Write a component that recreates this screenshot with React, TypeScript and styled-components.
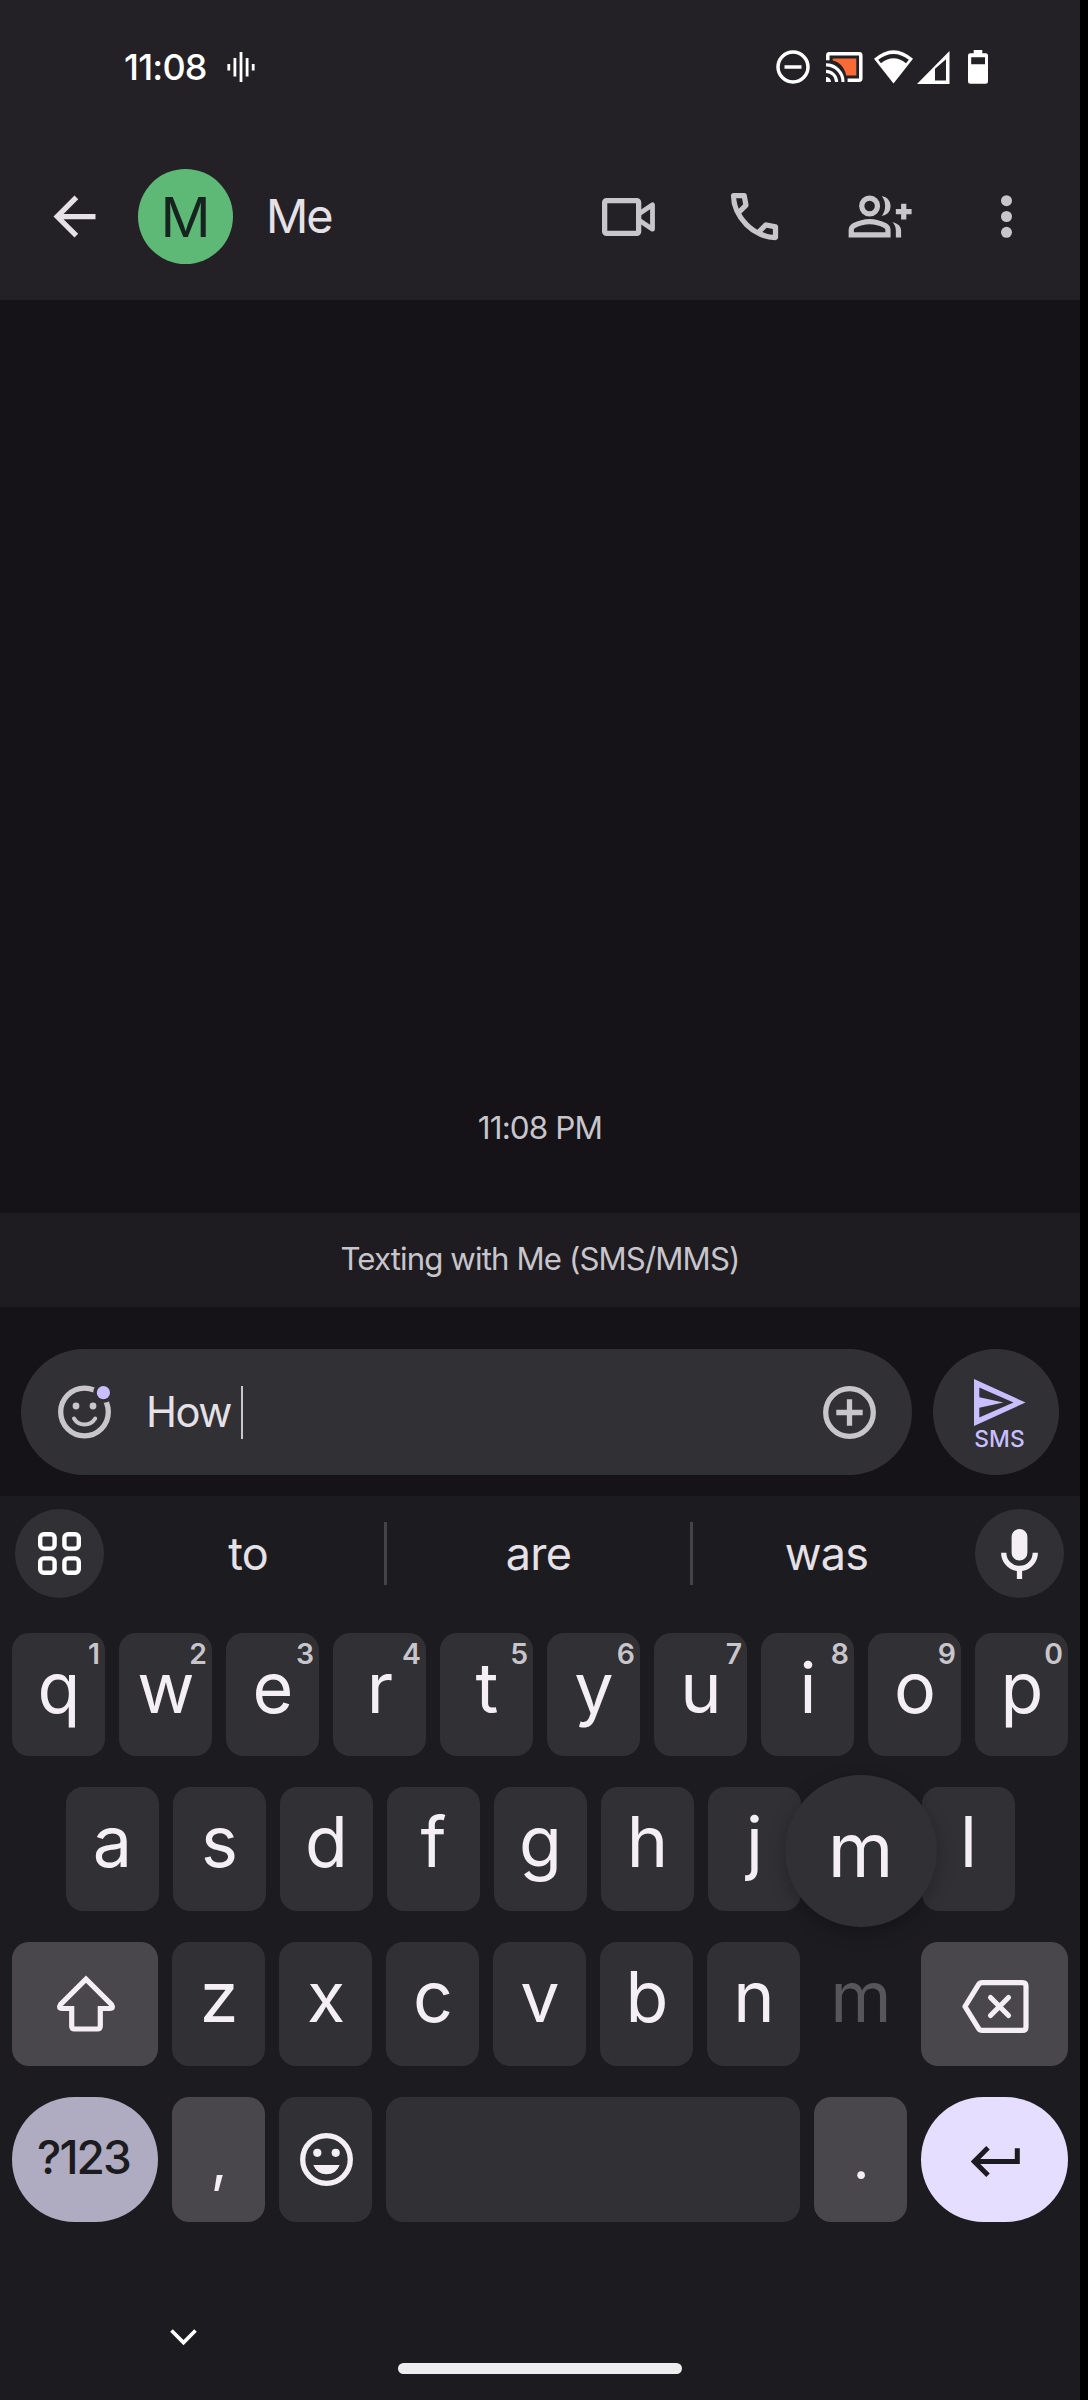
import React from "react";
import styled, { createGlobalStyle, css } from "styled-components";

const color = {
  header: "#232126",
  thread: "#151318",
  surface: "#1c1b20",
  field: "#313035",
  funcKey: "#49464c",
  text: "#e5e1e6",
  muted: "#c8c5cb",
  key: "#f3eff5",
  accent: "#c9bfff",
};

const Global = createGlobalStyle`
  html, body { margin: 0; padding: 0; background: #000; }
  *, *::before, *::after { box-sizing: border-box; }
  svg { display: block; flex: none; }
`;

const Screen = styled.main`
  display: flex;
  flex-direction: column;
  width: 1080px;
  height: 2400px;
  background: ${color.thread};
  color: ${color.text};
  font-family: Inter, Roboto, sans-serif;
  font-weight: 400;
  overflow: hidden;
`;

/* Header */

const Header = styled.header`
  height: 300px;
  background: ${color.header};
`;

const StatusBar = styled.div`
  display: flex;
  align-items: center;
  height: 134px;
  padding: 0 92px 0 124px;
  color: #fff;
`;

const Clock = styled.span`
  width: 103px;
  font-size: 36px;
  font-weight: 500;
  line-height: 134px;
  letter-spacing: -0.8px;
  white-space: nowrap;
`;

const StatusIcons = styled.div`
  display: flex;
  align-items: center;
  margin-left: auto;
`;

const StatusIcon = styled.span<{ $gap?: number }>`
  margin-left: ${(p) => p.$gap ?? 0}px;
`;

const AppBar = styled.div`
  display: flex;
  align-items: center;
  height: 165px;
  padding: 0 42px 0 43px;
  color: ${color.muted};
`;

const Avatar = styled.div`
  width: 95px;
  height: 95px;
  margin-left: 32px;
  border-radius: 50%;
  background: #5eb977;
  color: #16231f;
  font-size: 55.5px;
  line-height: 96px;
  text-align: center;
`;

const ContactName = styled.h1`
  margin: 0 0 0 33px;
  font-size: 46.8px;
  font-weight: 400;
  line-height: 94px;
  letter-spacing: -2px;
  color: ${color.text};
  transform: translateY(-1px);
`;

const Actions = styled.nav`
  display: flex;
  align-items: center;
  margin-left: auto;
`;

const Action = styled.span<{ $gap?: number }>`
  margin-left: ${(p) => p.$gap ?? 0}px;
`;

/* Conversation */

const Thread = styled.section`
  display: flex;
  flex-direction: column;
  justify-content: flex-end;
  height: 913px;
`;

const Timestamp = styled.time`
  height: 85px;
  margin-bottom: 43px;
  font-size: 31.5px;
  line-height: 85px;
  letter-spacing: -0.9px;
  text-align: center;
  color: ${color.muted};
`;

const Notice = styled.p`
  height: 94px;
  margin: 0;
  background: #1e1c21;
  font-size: 31.2px;
  line-height: 92px;
  letter-spacing: -0.88px;
  text-align: center;
  color: ${color.muted};
`;

const Composer = styled.div`
  display: flex;
  gap: 21px;
  height: 189px;
  padding: 42px 21px 21px;
`;

const Field = styled.div`
  display: flex;
  align-items: center;
  flex: 1;
  height: 126px;
  padding: 0 36px 0 37px;
  border-radius: 63px;
  background: ${color.field};
`;

const Draft = styled.span`
  flex: none;
  margin-left: 34px;
  font-size: 41.7px;
  line-height: 122px;
  letter-spacing: -1.5px;
`;

const Caret = styled.i`
  width: 2px;
  height: 53px;
  margin: 0 auto 0 10px;
  background: ${color.muted};
`;

const Send = styled.button`
  display: flex;
  flex-direction: column;
  align-items: center;
  width: 126px;
  height: 126px;
  padding: 30px 0 0 7px;
  border: 0;
  border-radius: 50%;
  background: ${color.field};
  color: ${color.accent};
  font: 500 22.8px/26px Inter, Roboto, sans-serif;
`;

/* Keyboard */

const Keyboard = styled.section`
  height: 904px;
  background: ${color.surface};
`;

const Suggestions = styled.div`
  display: flex;
  align-items: center;
  height: 115px;
  padding: 0 16px 0 15px;
`;

const RoundButton = styled.button`
  display: grid;
  place-items: center;
  flex: none;
  width: 89px;
  height: 89px;
  padding: 0;
  border: 0;
  border-radius: 50%;
  background: ${color.field};
  color: ${color.key};
`;

const Suggestion = styled.span<{ $width: number; $inset?: number }>`
  width: ${(p) => p.$width}px;
  padding-left: ${(p) => p.$inset ?? 0}px;
  font-size: 45px;
  line-height: 114px;
  letter-spacing: -0.8px;
  text-align: center;
  color: ${color.text};
`;

const Divider = styled.i`
  flex: none;
  width: 3px;
  height: 63px;
  background: #444347;
`;

const Rows = styled.div`
  display: flex;
  flex-direction: column;
  gap: 31px;
  padding: 22px 12px 0;
`;

const Row = styled.div<{ $height?: number }>`
  display: flex;
  justify-content: center;
  gap: 14px;
  height: ${(p) => p.$height ?? 124}px;
`;

type KeyTone = "letter" | "func" | "symbols" | "enter" | "pressed";

const tones: Record<KeyTone, ReturnType<typeof css>> = {
  letter: css`background: ${color.field};`,
  func: css`background: ${color.funcKey};`,
  symbols: css`
    padding-right: 4px;
    background: #afabc1;
    color: #1c1b20;
    border-radius: 63px;
    font-size: 46px;
    font-weight: 500;
    line-height: 120px;
    letter-spacing: -1.9px;
  `,
  enter: css`
    background: #e5deff;
    color: #1c1b20;
    border-radius: 63px;
  `,
  pressed: css`color: #57565a;`,
};

const Key = styled.div<{ $tone?: KeyTone; $width?: number; $icon?: boolean }>`
  position: relative;
  flex: none;
  width: ${(p) => p.$width ?? 93}px;
  height: 100%;
  padding-left: 1px;
  border-radius: 17px;
  color: ${color.key};
  font-size: 70px;
  line-height: 109px;
  text-align: center;
  ${(p) => tones[p.$tone ?? "letter"]}
  ${(p) => p.$icon && css`display: grid; place-items: center;`}
`;

const Punctuation = styled.span<{ $line?: number }>`
  font-size: 58px;
  line-height: ${(p) => p.$line ?? 122}px;
`;

const Hint = styled.sup`
  position: absolute;
  top: 0;
  right: 5px;
  font-size: 28.4px;
  font-weight: 600;
  line-height: 42px;
  color: ${color.muted};
`;

const Popup = styled.div`
  position: absolute;
  z-index: 1;
  left: 50%;
  top: -167px;
  width: 152px;
  height: 152px;
  margin-left: -76px;
  border-radius: 50%;
  background: ${color.field};
  box-shadow: 0 6px 18px rgba(0, 0, 0, 0.25);
  color: ${color.key};
  font-size: 75px;
  line-height: 149px;
`;

const NavBar = styled.footer`
  display: flex;
  align-items: flex-start;
  padding: 107px 0 0 169.5px;
`;

const HomeBar = styled.i`
  width: 284px;
  height: 11px;
  margin: 34px 0 0 201.5px;
  border-radius: 6px;
  background: #ededee;
`;

/* Icons */

const WaveIcon = () => (
  <svg width="28" height="30" viewBox="0 0 28 30" stroke="currentColor" strokeWidth="2.8">
    <path d="M1.8 12v6.5M7.9 6v18.5M14 0v30M20.1 6v18.5M26.2 12v6.5" />
  </svg>
);

const DndIcon = () => (
  <svg width="34" height="34" viewBox="0 0 34 34" fill="none" stroke="currentColor" strokeWidth="3.5">
    <circle cx="17" cy="17" r="15" />
    <path d="M8.5 17h17" />
  </svg>
);

const CastIcon = () => (
  <svg width="37" height="30" viewBox="0 0 37 30" fill="none">
    <path d="M6.7 6.4h23.6v17H20.2C18.7 15.8 13.6 10 6.7 8.6z" fill="#f96a34" />
    <path d="M1.8 8.3V3.4q0-1.6 1.6-1.6h29.8q1.6 0 1.6 1.6v23.2q0 1.6-1.6 1.6H21.6" stroke="#fff" strokeWidth="3.5" />
    <path d="M0 12.9A17 17 0 0 1 17 30M0 19.4A10.6 10.6 0 0 1 10.6 30" stroke="#fff" strokeWidth="3.1" />
    <path d="M0 25a5 5 0 0 1 5 5H0z" fill="#fff" />
  </svg>
);

const WifiIcon = () => (
  <svg width="39" height="34" viewBox="0 0 39 34">
    <path d="M0 8.8Q19.5-8.4 39 8.8L19.5 33.4z" fill="#fff" />
    <path d="M4.2 9.8Q19.5-1.8 34.8 9.8L32 13.2Q19.5 3.4 7 13.2z" fill={color.header} />
  </svg>
);

const SignalIcon = () => (
  <svg width="33" height="33" viewBox="0 0 33 33" fill="#fff">
    <path fillRule="evenodd" d="M0 33 32.5 0v33zM18 17.8v11.8h11V8.2z" />
  </svg>
);

const BatteryIcon = () => (
  <svg width="20" height="34" viewBox="0 0 20 34" fill="#fff">
    <path fillRule="evenodd" d="M5.7 0h8.6v3.2h3.4Q20 3.2 20 5.5v26q0 2.3-2.3 2.3H2.3Q0 33.8 0 31.5v-26q0-2.3 2.3-2.3h3.4zM3.2 7.2v7h13.8v-7z" />
  </svg>
);

const BackIcon = () => (
  <svg width="63" height="63" viewBox="0 0 24 24" fill={color.text}>
    <path d="M20 11H7.83l5.59-5.59L12 4l-8 8 8 8 1.41-1.41L7.83 13H20z" />
  </svg>
);

const VideoIcon = () => (
  <svg width="53" height="38" viewBox="0 0 53 38" fill="none" stroke="currentColor" strokeWidth="5.3" strokeLinejoin="round">
    <rect x="2.65" y="2.65" width="34" height="32.7" rx="1.8" />
    <path d="M37.500 15.500 50.500 6.800v24.400L37.500 22.500" strokeWidth="4.8" />
  </svg>
);

const PhoneIcon = () => (
  <svg width="63" height="63" viewBox="0 0 24 24" fill="currentColor">
    <path d="M19.950 21q-3.125 0-6.175-1.362-3.050-1.363-5.550-3.863-2.500-2.500-3.862-5.550Q3 7.175 3 4.050q0-.450.300-.750t.750-.300H8.100q.350 0 .625.238.275.237.325.562l.650 3.500q.050.400-.025.675-.075.275-.275.475L6.975 10.900q.500.925 1.187 1.787.688.863 1.513 1.663.775.775 1.625 1.437.850.663 1.800 1.213l2.350-2.350q.225-.225.588-.338.362-.112.712-.062l3.450.700q.350.100.575.363.225.262.225.587v4.050q0 .450-.300.750t-.750.300ZM6.025 9l1.650-1.650L7.250 5H5.025q.125 1.025.350 2.025.225 1 .650 1.975Zm8.950 8.950q.975.425 1.987.675 1.013.250 2.038.325v-2.200l-2.350-.475Z" />
  </svg>
);

const AddPeopleIcon = () => (
  <svg width="65.6" height="63" viewBox="0 0 25 24" fill="currentColor">
    <circle cx="9" cy="8" r="3" fill="none" stroke="currentColor" strokeWidth="2" />
    <path d="M13.600 4.200Q17 4.900 17 8t-3.400 3.800Q14.900 10.200 14.900 8t-1.300-3.800z" />
    <path d="M1 20v-2.800q0-.850.438-1.562.437-.713 1.162-1.088 1.550-.775 3.150-1.163Q7.350 13 9 13t3.250.387q1.600.388 3.150 1.163.725.375 1.162 1.088Q17 16.350 17 17.200V20Zm2-2h12v-.800q0-.275-.137-.500-.138-.225-.363-.350-1.350-.675-2.725-1.013Q10.400 15 9 15t-2.775.337Q4.850 15.675 3.500 16.350q-.225.125-.362.350-.138.225-.138.500Z" />
    <path d="M17.700 14.100Q21 15 21 17.400V20h-2v-2.600q0-1.900-1.300-3.300zM21 7.100h2v2h2v2h-2v2h-2v-2h-2v-2h2z" />
  </svg>
);

const MoreIcon = () => (
  <svg width="63" height="63" viewBox="0 0 63 63" fill="currentColor">
    <circle cx="31.5" cy="15.7" r="5.5" />
    <circle cx="31.5" cy="31.5" r="5.5" />
    <circle cx="31.5" cy="47.3" r="5.5" />
  </svg>
);

const StickerIcon = () => (
  <svg width="54" height="54" viewBox="0 0 54 54" fill="none" stroke={color.muted}>
    <circle cx="26.5" cy="27" r="23.8" strokeWidth="5.3" />
    <circle cx="45.4" cy="7.7" r="10.2" fill={color.field} stroke="none" />
    <circle cx="45.4" cy="7.7" r="6.6" fill={color.accent} stroke="none" />
    <circle cx="18" cy="21" r="3.4" fill={color.muted} stroke="none" />
    <circle cx="35" cy="21" r="3.4" fill={color.muted} stroke="none" />
    <path d="M16 33.500Q19.500 39.500 26.500 39.500T37.200 33.500" strokeWidth="4" strokeLinecap="round" />
  </svg>
);

const PlusIcon = () => (
  <svg width="53" height="53" viewBox="0 0 53 53" fill="none" stroke={color.muted} strokeWidth="5.3">
    <circle cx="26.5" cy="26.5" r="23.8" />
    <path d="M13.300 26.500h26.400M26.500 13.300v26.400" />
  </svg>
);

const SendIcon = () => (
  <svg width="52" height="47" viewBox="0 0 52 47" fill="currentColor">
    <path fillRule="evenodd" d="M0 0 51.500 23.500 0 47zM5.300 8.500v9.700l24 5.300-24 5.300v9.700L39.500 23.500z" />
  </svg>
);

const AppsIcon = () => (
  <svg width="43" height="43" viewBox="0 0 43 43" fill="none" stroke="#fff" strokeWidth="4.4">
    <rect x="2.2" y="2.2" width="14.4" height="14.4" rx="3.6" />
    <rect x="26.4" y="2.2" width="14.4" height="14.4" rx="3.6" />
    <rect x="2.2" y="26.4" width="14.4" height="14.4" rx="3.6" />
    <rect x="26.4" y="26.4" width="14.4" height="14.4" rx="3.6" />
  </svg>
);

const MicIcon = () => (
  <svg width="37" height="50" viewBox="5 2 14 19" fill="currentColor">
    <path d="M12 14q-1.250 0-2.125-.875T9 11V5q0-1.250.875-2.125T12 2q1.250 0 2.125.875T15 5v6q0 1.250-.875 2.125T12 14Zm-1 7v-3.075q-2.600-.350-4.300-2.325Q5 13.625 5 11h2q0 2.075 1.463 3.538Q9.925 16 12 16q2.075 0 3.538-1.462Q17 13.075 17 11h2q0 2.625-1.700 4.600-1.700 1.975-4.300 2.325V21Z" />
  </svg>
);

const ShiftIcon = () => (
  <svg width="60" height="58" viewBox="0 0 60 58" fill="none" stroke="currentColor" strokeWidth="5.2">
    <path d="M30 4.200 4.600 29.500Q2 33.500 6 33.500H15.700V51Q15.700 54 18.700 54H41.300Q44.300 54 44.300 51V33.500H54Q58 33.500 55.400 29.500z" />
  </svg>
);

const BackspaceIcon = () => (
  <svg width="67" height="53" viewBox="0 0 67 53" fill="none" stroke="currentColor" strokeWidth="5.2" strokeLinecap="round" strokeLinejoin="round">
    <path d="M3 26.500 16.500 4.700Q17.800 2.600 20.200 2.600H60.500Q64 2.600 64 6.100V46.900Q64 50.400 60.500 50.400H20.200Q17.800 50.400 16.500 48.300z" />
    <path d="m28.500 17.500 18 18m0-18-18 18" />
  </svg>
);

const SmileyIcon = () => (
  <svg width="53" height="53" viewBox="0 0 53 53" fill="currentColor">
    <circle cx="26.5" cy="26.5" r="23.8" fill="none" stroke="currentColor" strokeWidth="5.3" />
    <circle cx="17.3" cy="19.8" r="4.1" />
    <circle cx="35.7" cy="19.8" r="4.1" />
    <path d="M13.300 32h26.400Q36 41.300 26.500 41.300T13.300 32z" />
  </svg>
);

const EnterIcon = () => (
  <svg width="49" height="31" viewBox="0 0 49 31" fill="none" stroke="currentColor" strokeWidth="5">
    <path d="M46.300 2.200V15.500H4M17 1.800 3.300 15.500 17 29.200" />
  </svg>
);

const ChevronIcon = () => (
  <svg width="27" height="17" viewBox="0 0 27 17" fill="none" stroke="#fff" strokeWidth="3.6">
    <path d="M1.500 1.500 13.500 13.600 25.500 1.500" />
  </svg>
);

const Shift = styled.span<{ $x?: number; $y?: number }>`
  padding: ${(p) => p.$y ?? 0}px 0 0 ${(p) => p.$x ?? 0}px;
`;

const topRow = ["q", "w", "e", "r", "t", "y", "u", "i", "o", "p"];
const homeRow = ["a", "s", "d", "f", "g", "h", "j", "", "l"];
const bottomRow = ["z", "x", "c", "v", "b", "n"];

export default function App() {
  return (
    <>
      <Global />
      <Screen>
        <Header>
          <StatusBar>
            <Clock>11:08</Clock>
            <WaveIcon />
            <StatusIcons>
              <StatusIcon><DndIcon /></StatusIcon>
              <StatusIcon $gap={16}><CastIcon /></StatusIcon>
              <StatusIcon $gap={11}><WifiIcon /></StatusIcon>
              <StatusIcon $gap={4}><SignalIcon /></StatusIcon>
              <StatusIcon $gap={18}><BatteryIcon /></StatusIcon>
            </StatusIcons>
          </StatusBar>
          <AppBar>
            <BackIcon />
            <Avatar>M</Avatar>
            <ContactName>Me</ContactName>
            <Actions>
              <Action><VideoIcon /></Action>
              <Action $gap={68}><PhoneIcon /></Action>
              <Action $gap={60}><AddPeopleIcon /></Action>
              <Action $gap={63}><MoreIcon /></Action>
            </Actions>
          </AppBar>
        </Header>

        <Thread>
          <Timestamp>11:08 PM</Timestamp>
        </Thread>
        <Notice>Texting with Me (SMS/MMS)</Notice>
        <Composer>
          <Field>
            <StickerIcon />
            <Draft>How</Draft>
            <Caret />
            <PlusIcon />
          </Field>
          <Send>
            <SendIcon />
            SMS
          </Send>
        </Composer>

        <Keyboard>
          <Suggestions>
            <RoundButton><AppsIcon /></RoundButton>
            <Suggestion $width={280} $inset={8}>to</Suggestion>
            <Divider />
            <Suggestion $width={303}>are</Suggestion>
            <Divider />
            <Suggestion $width={267}>was</Suggestion>
            <Shift $x={15}>
              <RoundButton><MicIcon /></RoundButton>
            </Shift>
          </Suggestions>

          <Rows>
            <Row $height={123}>
              {topRow.map((letter, i) => (
                <Key key={letter}>
                  {letter}
                  <Hint>{(i + 1) % 10}</Hint>
                </Key>
              ))}
            </Row>
            <Row>
              {homeRow.map((letter, i) => (
                <Key key={i}>{letter}</Key>
              ))}
            </Row>
            <Row>
              <Key $tone="func" $width={146} $icon><ShiftIcon /></Key>
              {bottomRow.map((letter) => (
                <Key key={letter}>{letter}</Key>
              ))}
              <Key $tone="pressed">
                m
                <Popup>m</Popup>
              </Key>
              <Key $tone="func" $width={147} $icon><Shift $y={5}><BackspaceIcon /></Shift></Key>
            </Row>
            <Row $height={125}>
              <Key $tone="symbols" $width={146}>?123</Key>
              <Key $tone="func"><Punctuation $line={126}>,</Punctuation></Key>
              <Key $icon><SmileyIcon /></Key>
              <Key $width={414} />
              <Key $tone="func"><Punctuation>.</Punctuation></Key>
              <Key $tone="enter" $width={147} $icon><Shift $y={4}><EnterIcon /></Shift></Key>
            </Row>
          </Rows>

          <NavBar>
            <ChevronIcon />
            <HomeBar />
          </NavBar>
        </Keyboard>
      </Screen>
    </>
  );
}
